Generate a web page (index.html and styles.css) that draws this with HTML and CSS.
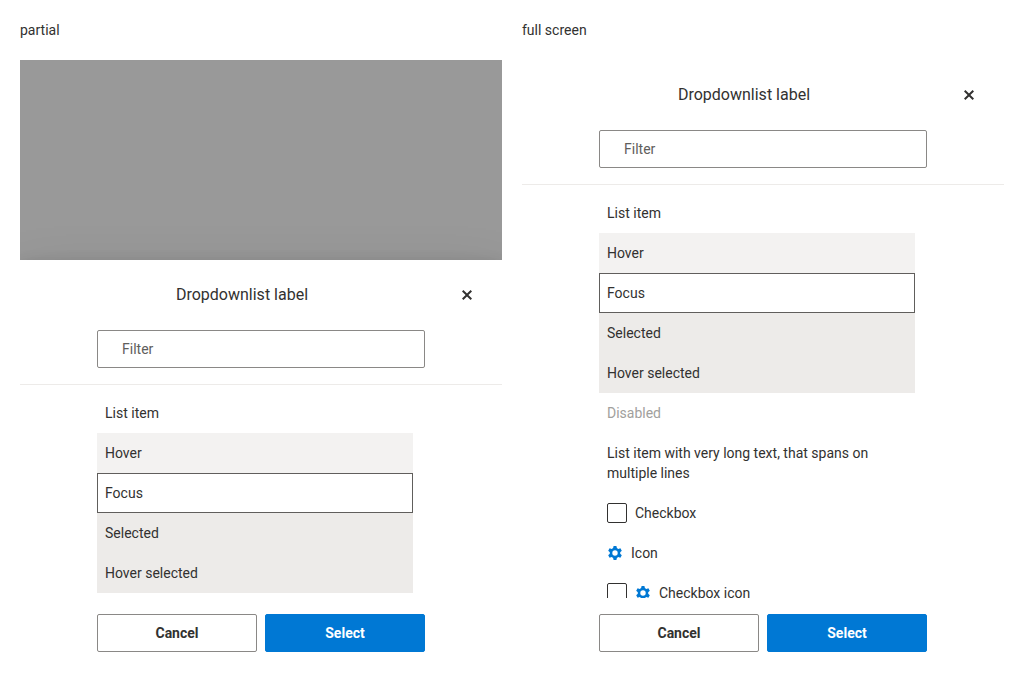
FILE: index.html
```html
<!DOCTYPE html>
<html lang="en">
<head>
<meta charset="utf-8">
<title>Dropdown list action sheet</title>
<link rel="stylesheet" href="styles.css">
</head>
<body>
<svg class="defs" width="0" height="0">
  <symbol id="gear" viewBox="0 0 16 16"><path fill-rule="evenodd" d="M6.6 1h2.8l.5 2.1 1.4.8 2.1-.6 1.4 2.4-1.6 1.5v1.6l1.6 1.5-1.4 2.4-2.1-.6-1.4.8-.5 2.1H6.6l-.5-2.1-1.4-.8-2.1.6-1.4-2.4 1.6-1.5V7.2L1.2 5.7l1.4-2.4 2.1.6 1.4-.8zM8 5.3a2.7 2.7 0 1 0 0 5.4 2.7 2.7 0 0 0 0-5.4z"/></symbol>
  <symbol id="close" viewBox="0 0 16 16"><path d="M13 4.4 11.6 3 8 6.6 4.4 3 3 4.4 6.6 8 3 11.6 4.4 13 8 9.4l3.6 3.6 1.4-1.4L9.4 8z"/></symbol>
</svg>
<main class="page">
  <section class="demo">
    <span class="caption">partial</span>
    <div class="screen partial">
      <div class="sheet">
        <header class="header">
          <div class="titlebar"><span class="title">Dropdownlist label</span><svg class="close"><use href="#close"/></svg></div>
          <input class="filter" type="text" placeholder="Filter">
        </header>
        <ul class="list">
          <li class="item">List item</li>
          <li class="item hover">Hover</li>
          <li class="item focus">Focus</li>
          <li class="item selected">Selected</li>
          <li class="item selected">Hover selected</li>
        </ul>
        <footer class="actions"><button class="button">Cancel</button><button class="button primary">Select</button></footer>
      </div>
    </div>
  </section>
  <section class="demo">
    <span class="caption">full screen</span>
    <div class="screen">
      <div class="sheet">
        <header class="header">
          <div class="titlebar"><span class="title">Dropdownlist label</span><svg class="close"><use href="#close"/></svg></div>
          <input class="filter" type="text" placeholder="Filter">
        </header>
        <ul class="list">
          <li class="item">List item</li>
          <li class="item hover">Hover</li>
          <li class="item focus">Focus</li>
          <li class="item selected">Selected</li>
          <li class="item selected">Hover selected</li>
          <li class="item disabled">Disabled</li>
          <li class="item">List item with very long text, that spans on multiple lines</li>
          <li class="item row"><span class="checkbox"></span>Checkbox</li>
          <li class="item row"><svg class="icon"><use href="#gear"/></svg>Icon</li>
          <li class="item row"><span class="checkbox"></span><svg class="icon"><use href="#gear"/></svg>Checkbox icon</li>
        </ul>
        <footer class="actions"><button class="button">Cancel</button><button class="button primary">Select</button></footer>
      </div>
    </div>
  </section>
</main>
</body>
</html>
```
FILE: styles.css
```css
* { box-sizing: border-box; }
body {
  margin: 0;
  overflow: hidden;
  background: #fff;
  color: #323130;
  font: 14px/20px Roboto, "Liberation Sans", sans-serif;
}
.defs { position: absolute; }
.page {
  display: grid;
  grid-template-columns: 482px 482px;
  gap: 20px;
  padding: 20px;
}
.demo { display: flex; flex-direction: column; gap: 20px; }
.screen {
  display: flex;
  flex-direction: column;
  height: 608px;
  overflow: hidden;
}
.partial { background: #999; padding-top: 200px; }
.sheet {
  display: flex;
  flex: 1;
  flex-direction: column;
  min-height: 0;
  background: #fff;
}
.partial .sheet { box-shadow: 0 25.6px 57.6px rgba(0, 0, 0, .22), 0 4.8px 14.4px rgba(0, 0, 0, .18); }
.header {
  flex: none;
  display: flex;
  flex-direction: column;
  gap: 16px;
  height: 125px;
  padding-top: 16px;
  border-bottom: 1px solid #edebe9;
}
.titlebar {
  display: grid;
  grid-template-columns: 1fr 38px;
  align-items: center;
  height: 38px;
  padding: 0 16px;
}
.title { font-size: 16px; line-height: 22px; text-align: center; padding: 0 16px; }
.close { width: 16px; height: 16px; justify-self: center; fill: #323130; }
.filter {
  align-self: center;
  width: 328px;
  height: 38px;
  padding: 0 24px;
  border: 1px solid #8a8886;
  border-radius: 2px;
  background: #fff;
  font: inherit;
}
.filter::placeholder { color: #605e5c; opacity: 1; }
.list {
  flex: 1;
  min-height: 0;
  width: 328px;
  margin: 0 auto;
  padding: 8px 12px 0 0;
  overflow: hidden;
  list-style: none;
}
.item { padding: 10px 8px; }
.hover { background: #f3f2f1; }
.focus { box-shadow: inset 0 0 0 1px #605e5c; }
.selected { background: #edebe9; }
.disabled { color: #a19f9d; }
.row { display: flex; align-items: center; gap: 8px; }
.checkbox {
  width: 20px;
  height: 20px;
  border: 1px solid #323130;
  border-radius: 2px;
}
.icon { width: 16px; height: 16px; fill: #0078d4; }
.actions {
  flex: none;
  display: flex;
  justify-content: center;
  gap: 8px;
  height: 70px;
  padding: 16px 0;
}
.button {
  width: 160px;
  height: 38px;
  padding: 0;
  border: 1px solid #8a8886;
  border-radius: 2px;
  background: #fff;
  color: #323130;
  font: inherit;
  font-weight: 700;
}
.primary { border-color: #0078d4; background: #0078d4; color: #fff; }
```
